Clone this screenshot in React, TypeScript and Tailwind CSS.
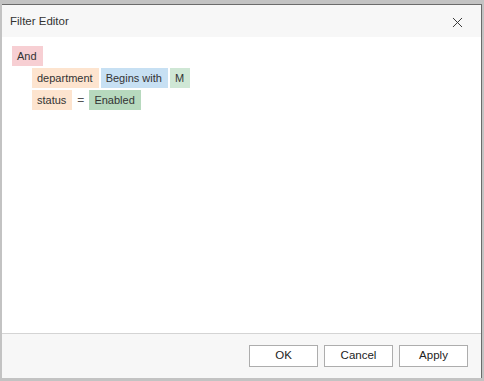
import { X } from 'lucide-react'

const font = { fontFamily: '"Liberation Sans", Arial, sans-serif' }

function Chip({ bg, children }: { bg: string; children: React.ReactNode }) {
  return (
    <span className={`inline-flex h-5 items-center pl-[5px] pr-[6px] ${bg}`}>{children}</span>
  )
}

function Btn({ label }: { label: string }) {
  return (
    <button className="h-[22px] w-[69px] border border-[#adadad] bg-white text-[11.5px] text-[#222]">
      {label}
    </button>
  )
}

export default function App() {
  return (
    <div
      className="flex h-[381px] w-[484px] flex-col bg-[#c3c3c3] pt-[4px] pl-[2px] pr-[2px] pb-[3px]"
      style={font}
    >
      <div className="flex flex-1 flex-col border-t border-r border-[#6b6b6b] bg-white">
        {/* title */}
        <div className="flex h-[32px] items-center justify-between bg-[#f7f7f7] pl-[8px] pr-[15px] pt-[2px]">
          <span className="text-[11.5px] text-[#333]">Filter Editor</span>
          <X size={17} strokeWidth={1.4} className="text-[#3a3a3a]" />
        </div>

        {/* filter tree */}
        <div className="flex flex-1 flex-col gap-[2px] px-[10px] pt-[9px] text-[11px] text-[#333]">
          <div className="flex">
            <Chip bg="bg-[#f7cfd3]">And</Chip>
          </div>
          <div className="flex gap-[2px] pl-[20px]">
            <Chip bg="bg-[#fde4cf]">department</Chip>
            <Chip bg="bg-[#c7e0f3]">Begins with</Chip>
            <Chip bg="bg-[#cfe7d5]">M</Chip>
          </div>
          <div className="flex items-center gap-[4px] pl-[20px]">
            <Chip bg="bg-[#fde4cf]">status</Chip>
            <span className="px-[1px] text-[12px] text-[#555]">=</span>
            <Chip bg="bg-[#b7d9be]">Enabled</Chip>
          </div>
        </div>

        {/* footer */}
        <div className="flex h-[45px] items-center justify-end gap-[6px] border-t border-[#d4d4d4] bg-[#f7f7f7] pr-[13px]">
          <Btn label="OK" />
          <Btn label="Cancel" />
          <Btn label="Apply" />
        </div>
      </div>
    </div>
  )
}
